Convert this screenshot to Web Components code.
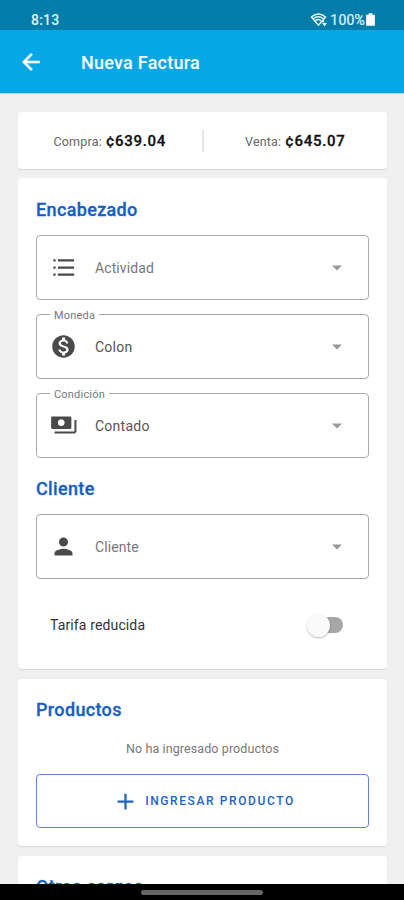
<!DOCTYPE html>
<html lang="es">
<head>
<meta charset="utf-8">
<title>Nueva Factura</title>
<style>
	html, body {
		margin: 0;
		height: 100%;
		overflow: hidden;
		font-family: Roboto, "Liberation Sans", sans-serif;
		background: #f0f0f0;
	}
</style>
</head>
<body>
<invoice-screen></invoice-screen>

<script>
// Icon shapes, all drawn on a 24x24 grid
const ICONS = {
	back: '<path d="M20 11H7.83l5.59-5.59L12 4l-8 8 8 8 1.41-1.41L7.83 13H20v-2z" stroke="currentColor" stroke-width=".5"/>',
	list: '<path d="M3 4.700h2v2H3zM3 11h2v2H3zM3 17.300h2v2H3zM7 4.700h14.500v2H7zM7 11h14.500v2H7zM7 17.300h14.500v2H7z"/>',
	money: '<path d="M12 2C6.48 2 2 6.48 2 12s4.48 10 10 10 10-4.48 10-10S17.52 2 12 2zm1.41 16.09V20h-2.67v-1.93c-1.71-.36-3.16-1.46-3.27-3.4h1.96c.1 1.05.82 1.87 2.65 1.87 1.96 0 2.4-.98 2.4-1.59 0-.83-.44-1.61-2.67-2.14-2.48-.6-4.18-1.62-4.18-3.67 0-1.72 1.39-2.84 3.11-3.21V4h2.67v1.95c1.86.45 2.79 1.86 2.85 3.39H14.3c-.05-1.11-.64-1.87-2.22-1.87-1.5 0-2.4.68-2.4 1.64 0 .84.65 1.39 2.67 1.91s4.18 1.39 4.18 3.91c-.01 1.83-1.38 2.83-3.12 3.16z"/>',
	payments: '<path d="M19 14V5c0-.6-.4-1-1-1H2c-.6 0-1 .4-1 1v9c0 .6.4 1 1 1h16c.6 0 1-.4 1-1zm-9-1.500c-1.660 0-3-1.340-3-3s1.340-3 3-3 3 1.340 3 3-1.340 3-3 3zm13.500-5.500v10c0 1.100-.9 2-2 2H4v-1.700h17.700V7z"/>',
	person: '<path d="M12 12c2.210 0 4-1.790 4-4s-1.790-4-4-4-4 1.790-4 4 1.790 4 4 4zm0 2c-2.670 0-8 1.340-8 4v2h16v-2c0-2.660-5.330-4-8-4z"/>',
	caret: '<path d="M7 9.500h10l-5 5z"/>',
	plus: '<path d="M19 13h-6v6h-2v-6H5v-2h6V5h2v6h6v2z"/>',
	battery: '<path d="M9 2h6v2.500h4V22H5V4.500h4z"/>',
	wifi: '<g fill="none" stroke="currentColor" stroke-width="2"><path d="M2 8.500Q12 0 22 8.500L12 20z"/><path d="M4.500 11Q12 5 19 11M7 14Q12 10 16 14"/></g><path d="M15 16l3-4 3 4zM17 17h7l-3.500 5z"/>'
};

/**
 * Icon taken from the ICONS table, sized with --size.
 */
class AppIcon extends HTMLElement {
	constructor() {
		super();
		const shadow = this.attachShadow({ mode: 'open' });
		shadow.innerHTML = `
		<style>
			:host { display: block; flex: none; width: var(--size, 24px); height: var(--size, 24px); }
			svg { display: block; width: 100%; height: 100%; fill: currentColor; }
		</style>
		<svg viewBox="0 0 24 24" aria-hidden="true">${ICONS[this.getAttribute('name')] || ''}</svg>
		`;
	}
}
customElements.define('app-icon', AppIcon);

/**
 * Phone status bar with the clock, wifi and battery.
 */
class StatusBar extends HTMLElement {
	constructor() {
		super();
		const shadow = this.attachShadow({ mode: 'open' });
		shadow.innerHTML = `
		<style>
			:host {
				display: flex; align-items: center; flex: none; box-sizing: border-box;
				height: 30px; padding: 9px 26px 0 31px;
				background: #047dab; color: #e2f3fa; font-size: 14px;
			}
			.time { flex: 1; font-weight: 500; letter-spacing: .2px; }
			.wifi { --size: 17px; margin-right: 3px; }
			.charge { -webkit-text-stroke: .2px; letter-spacing: .2px; }
			.battery { --size: 15px; margin-left: -2px; color: #fff; }
		</style>
		<span class="time"><slot name="time"></slot></span>
		<app-icon class="wifi" name="wifi"></app-icon>
		<span class="charge"><slot name="charge"></slot></span>
		<app-icon class="battery" name="battery"></app-icon>
		`;
	}
}
customElements.define('status-bar', StatusBar);

/**
 * Top bar with the back arrow and the screen title.
 */
class TopBar extends HTMLElement {
	constructor() {
		super();
		const shadow = this.attachShadow({ mode: 'open' });
		shadow.innerHTML = `
		<style>
			:host {
				display: flex; align-items: center; gap: 37px; flex: none; box-sizing: border-box;
				height: 63px; padding: 1px 18px 0; background: #05a8e4; color: #fff;
				box-shadow: 0 1px 1px #b5dceb;
			}
			app-icon { --size: 26px; }
			h1 { margin: 0; font-size: 18px; font-weight: 500; letter-spacing: .25px; }
		</style>
		<app-icon name="back"></app-icon>
		<h1><slot></slot></h1>
		`;
	}
}
customElements.define('top-bar', TopBar);

/**
 * White card around a group of fields.
 */
class FormCard extends HTMLElement {
	constructor() {
		super();
		const shadow = this.attachShadow({ mode: 'open' });
		shadow.innerHTML = `
		<style>
			:host {
				display: block; flex: none; box-sizing: border-box; padding: 0 18px;
				background: #fff; border-radius: 4px; box-shadow: 0 1px 1px #d9d9d9;
			}
		</style>
		<slot></slot>
		`;
	}
}
customElements.define('form-card', FormCard);

class SectionTitle extends HTMLElement {
	constructor() {
		super();
		const shadow = this.attachShadow({ mode: 'open' });
		shadow.innerHTML = `
		<style>
			:host { display: block; }
			h2 { margin: 0; font-size: 18px; line-height: 22px; font-weight: 500; letter-spacing: .35px; color: #1560c4; -webkit-text-stroke: .3px; }
		</style>
		<h2><slot></slot></h2>
		`;
	}
}
customElements.define('section-title', SectionTitle);

/**
 * Buying and selling rates, side by side.
 */
class ExchangeRate extends HTMLElement {
	constructor() {
		super();
		const shadow = this.attachShadow({ mode: 'open' });
		shadow.innerHTML = `
		<style>
			:host { display: flex; align-items: center; height: 57px; }
			div { flex: 1; display: flex; align-items: baseline; justify-content: center; gap: 4px; font-size: 12.5px; letter-spacing: .2px; color: #666; }
			b { font-size: 15px; font-weight: 500; letter-spacing: .7px; color: #111; -webkit-text-stroke: .3px; }
			i { flex: none; width: 2px; height: 22px; background: #e6e6e6; }
		</style>
		<div>Compra: <b><slot name="buy"></slot></b></div>
		<i></i>
		<div>Venta: <b><slot name="sell"></slot></b></div>
		`;
	}
}
customElements.define('exchange-rate', ExchangeRate);

/**
 * Outlined select. The label attribute floats over the top border.
 */
class SelectField extends HTMLElement {
	constructor() {
		super();
		const label = this.getAttribute('label');
		const shadow = this.attachShadow({ mode: 'open' });
		shadow.innerHTML = `
		<style>
			:host {
				display: flex; align-items: center; position: relative; box-sizing: border-box;
				height: 65px; padding: 0 19px 0 13px;
				border: 1px solid #a9a9a9; border-radius: 4px; color: #555;
			}
			.value { flex: 1; margin-left: 18px; font-size: 14px; letter-spacing: .25px; }
			:host([empty]) .value { color: #777; letter-spacing: .1px; }
			.icon { --size: 27px; color: #4a4a4a; }
			.caret { color: #999; }
			label {
				position: absolute; left: 13px; top: -7px; padding: 0 4px;
				background: #fff; font-size: 11px; line-height: 15px; letter-spacing: .2px; color: #777;
			}
		</style>
		${label ? `<label>${label}</label>` : ''}
		<app-icon class="icon" name="${this.getAttribute('icon')}"></app-icon>
		<span class="value"><slot></slot></span>
		<app-icon class="caret" name="caret"></app-icon>
		`;
	}
}
customElements.define('select-field', SelectField);

/**
 * Text with a switch at the right, drawn in the off state.
 */
class SwitchRow extends HTMLElement {
	constructor() {
		super();
		const shadow = this.attachShadow({ mode: 'open' });
		shadow.innerHTML = `
		<style>
			:host { display: flex; align-items: center; justify-content: space-between; height: 91px; padding: 0 26px 0 14px; font-size: 14px; letter-spacing: .13px; color: #333; }
			.track { position: relative; width: 32px; height: 16px; border-radius: 8px; background: #a6a6a6; }
			.thumb { position: absolute; left: -4px; top: -3px; width: 23px; height: 23px; border-radius: 50%; background: #fafafa; box-shadow: 0 1px 2px #0004; }
		</style>
		<span><slot></slot></span>
		<div class="track"><div class="thumb"></div></div>
		`;
	}
}
customElements.define('switch-row', SwitchRow);

class OutlineButton extends HTMLElement {
	constructor() {
		super();
		const shadow = this.attachShadow({ mode: 'open' });
		shadow.innerHTML = `
		<style>
			:host { display: block; }
			button {
				display: flex; align-items: center; justify-content: center; gap: 6px;
				box-sizing: border-box; width: 100%; height: 54px; padding: 0 0 0 2px;
				border: 1px solid #6187d3; border-radius: 4px; background: #fff;
				color: #1b63c6; font: 500 12px Roboto, sans-serif; letter-spacing: 1.6px;
			}
			app-icon { --size: 27px; }
		</style>
		<button><app-icon name="plus"></app-icon><slot></slot></button>
		`;
	}
}
customElements.define('outline-button', OutlineButton);

/**
 * Black system bar with the gesture handle.
 */
class NavBar extends HTMLElement {
	constructor() {
		super();
		const shadow = this.attachShadow({ mode: 'open' });
		shadow.innerHTML = `
		<style>
			:host { display: flex; align-items: center; justify-content: center; flex: none; height: 16px; background: #000; }
			i { width: 122px; height: 5px; border-radius: 3px; background: #666; }
		</style>
		<i></i>
		`;
	}
}
customElements.define('nav-bar', NavBar);

/**
 * The whole new invoice screen.
 */
class InvoiceScreen extends HTMLElement {
	constructor() {
		super();
		const shadow = this.attachShadow({ mode: 'open' });
		shadow.innerHTML = `
		<style>
			:host { display: flex; flex-direction: column; height: 100vh; }
			main { flex: 1; min-height: 0; overflow: hidden; display: flex; flex-direction: column; gap: 10px; padding: 19px 17px 0 18px; }
			.rates { margin-bottom: -1px; padding: 0; }
			.header { height: 491px; padding-top: 21px; }
			.fields { display: flex; flex-direction: column; gap: 14px; margin: 14px 0 20px; }
			.client { margin: 14px 0 0; }
			.products { height: 167px; padding-top: 20px; }
			.empty { margin: 19px 0 17px; text-align: center; font-size: 12.5px; line-height: 17px; letter-spacing: .1px; color: #777; }
			.charges { height: 80px; padding-top: 20px; }
		</style>
		<status-bar><span slot="time">8:13</span><span slot="charge">100%</span></status-bar>
		<top-bar>Nueva Factura</top-bar>
		<main>
			<form-card class="rates">
				<exchange-rate><span slot="buy">¢639.04</span><span slot="sell">¢645.07</span></exchange-rate>
			</form-card>
			<form-card class="header">
				<section-title>Encabezado</section-title>
				<div class="fields">
					<select-field icon="list" empty>Actividad</select-field>
					<select-field icon="money" label="Moneda">Colon</select-field>
					<select-field icon="payments" label="Condición">Contado</select-field>
				</div>
				<section-title>Cliente</section-title>
				<select-field class="client" icon="person" empty>Cliente</select-field>
				<switch-row>Tarifa reducida</switch-row>
			</form-card>
			<form-card class="products">
				<section-title>Productos</section-title>
				<p class="empty">No ha ingresado productos</p>
				<outline-button>INGRESAR PRODUCTO</outline-button>
			</form-card>
			<form-card class="charges">
				<section-title>Otros cargos</section-title>
			</form-card>
		</main>
		<nav-bar></nav-bar>
		`;
	}
}
customElements.define('invoice-screen', InvoiceScreen);
</script>
</body>
</html>
